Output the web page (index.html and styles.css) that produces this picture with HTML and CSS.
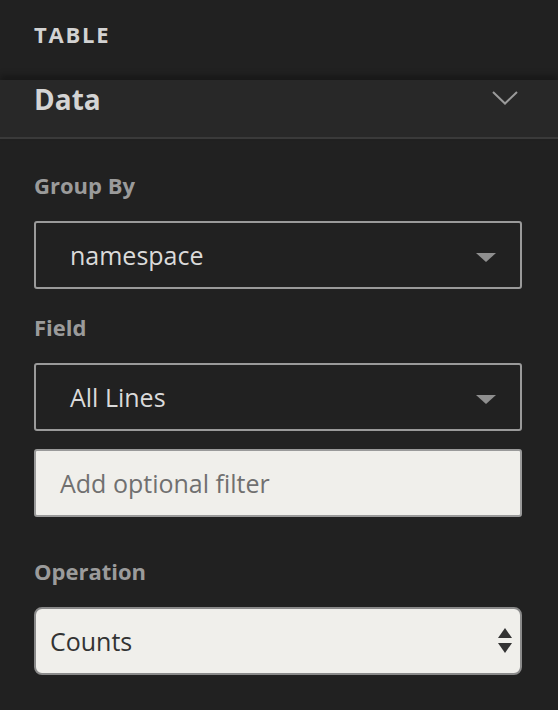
FILE: index.html
```html
<!DOCTYPE html>
<html>
<head>
<meta charset="utf-8">
<link rel="stylesheet" href="styles.css">
</head>
<body>
<div class="panel">
  <div class="title">TABLE</div>
  <div class="section-head">
    <span class="section-name">Data</span>
    <svg class="chevron" width="26" height="14" viewBox="0 0 26 14"><polyline points="1,1 13,12.5 25,1" fill="none" stroke="#9a9a9a" stroke-width="2"/></svg>
  </div>
  <div class="section-body">
    <div class="label">Group By</div>
    <div class="select dark">
      <span>namespace</span>
      <svg class="caret" width="20" height="9" viewBox="0 0 20 9"><polygon points="0,0 20,0 10,9" fill="#8f8f8f"/></svg>
    </div>
    <div class="label">Field</div>
    <div class="select dark">
      <span>All Lines</span>
      <svg class="caret" width="20" height="9" viewBox="0 0 20 9"><polygon points="0,0 20,0 10,9" fill="#8f8f8f"/></svg>
    </div>
    <div class="input">Add optional filter</div>
    <div class="label op">Operation</div>
    <div class="select light">
      <span>Counts</span>
      <svg class="updown" width="14" height="26" viewBox="0 0 14 26"><polygon points="7,0 14,10 0,10" fill="#333"/><polygon points="0,15 14,15 7,25" fill="#333"/></svg>
    </div>
  </div>
</div>
</body>
</html>
```
FILE: styles.css
```css
* { box-sizing: border-box; }
html, body { margin: 0; padding: 0; }
body {
  background: #212121;
  font-family: "Open Sans", "Noto Sans", sans-serif;
  width: 558px;
  height: 710px;
  overflow: hidden;
}
.panel { display: flex; flex-direction: column; }
.title {
  height: 72px;
  padding: 0 34px 4px;
  display: flex;
  align-items: center;
  font-size: 22px;
  font-weight: 700;
  letter-spacing: 1.8px;
  color: #d2d2d2;
  line-height: 1;
}
.section-head {
  position: relative;
  height: 59px;
  margin-top: 8px;
  padding: 3px 36px 0 34px;
  background: #282828;
  border-bottom: 2px solid #3a3a3a;
  box-shadow: 0 -5px 6px rgba(0,0,0,0.28);
  display: flex;
  justify-content: space-between;
  align-items: flex-start;
}
.section-name {
  font-size: 28px;
  font-weight: 700;
  line-height: 32px;
  color: #d4d4d4;
}
.chevron { margin-top: 8px; margin-right: 4px; }
.section-body {
  padding: 32px 36px 0 34px;
  display: flex;
  flex-direction: column;
}
.label {
  font-size: 22px;
  font-weight: 700;
  color: #9b9b9b;
  line-height: 28px;
  margin-bottom: 22px;
}
.select {
  height: 68px;
  border: 2px solid #9a9a9a;
  border-radius: 3px;
  display: flex;
  align-items: center;
  justify-content: space-between;
  font-size: 25px;
}
.select.dark {
  padding: 0 24px 0 34px;
  color: #dadada;
  margin-bottom: 24px;
}
.select.light {
  background: #f0efeb;
  border-color: #8a8a8a;
  border-radius: 8px;
  padding: 0 8px 0 14px;
  color: #333;
}
.caret { margin-top: 4px; }
.input {
  height: 68px;
  margin-top: -6px;
  border: 2px solid #9a9a9a;
  border-radius: 3px;
  background: #f0efeb;
  display: flex;
  align-items: center;
  padding: 0 24px;
  font-size: 25px;
  color: #707070;
}
.label.op { margin-top: 40px; }
```
